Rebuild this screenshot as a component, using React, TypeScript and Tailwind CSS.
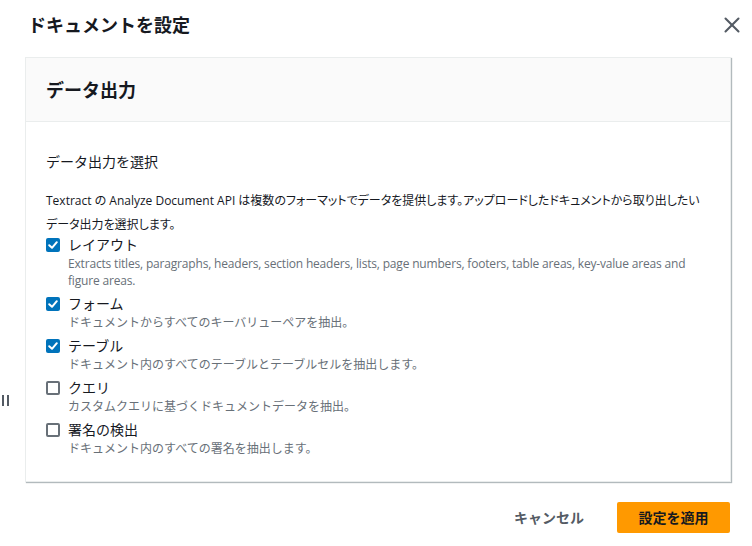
import { X } from 'lucide-react';

interface OutputOption {
  label: string;
  description: string;
  checked: boolean;
  latin?: boolean;
}

const options: OutputOption[] = [
  {
    label: 'レイアウト',
    description:
      'Extracts titles, paragraphs, headers, section headers, lists, page numbers, footers, table areas, key-value areas and figure areas.',
    checked: true,
    latin: true,
  },
  { label: 'フォーム', description: 'ドキュメントからすべてのキーバリューペアを抽出。', checked: true },
  { label: 'テーブル', description: 'ドキュメント内のすべてのテーブルとテーブルセルを抽出します。', checked: true },
  { label: 'クエリ', description: 'カスタムクエリに基づくドキュメントデータを抽出。', checked: false },
  { label: '署名の検出', description: 'ドキュメント内のすべての署名を抽出します。', checked: false },
];

function Checkbox({ checked }: { checked: boolean }) {
  if (checked) {
    return (
      <span className="flex h-[14px] w-[14px] items-center justify-center rounded-[2px] bg-[#0073bb]">
        <svg viewBox="0 0 14 14" className="h-[14px] w-[14px]" fill="none">
          <path d="M3.2 7.2 L6 9.8 L10.8 4.2" stroke="white" strokeWidth="2" strokeLinecap="round" strokeLinejoin="round" />
        </svg>
      </span>
    );
  }
  return <span className="block h-[14px] w-[14px] rounded-[2px] border-2 border-[#687078] bg-white" />;
}

export default function App() {
  return (
    <div
      className="relative h-[546px] w-[752px] overflow-hidden bg-white text-[#16191f]"
      style={{ fontFamily: '"Open Sans", "Noto Sans CJK JP", sans-serif' }}
    >
      {/* drag handle peeking in from the left */}
      <div className="absolute left-[2px] top-[395px] flex gap-[3px]">
        <span className="block h-[11px] w-[2px] bg-[#545b64]" />
        <span className="block h-[11px] w-[2px] bg-[#545b64]" />
      </div>

      <div className="flex items-center justify-between pl-[28px] pr-[7px] pt-[12px]">
        <h1 className="text-[18px] font-bold leading-[26px]">ドキュメントを設定</h1>
        <X className="h-[26px] w-[26px] text-[#545b64]" strokeWidth={1.9} />
      </div>

      <div className="ml-[25px] mr-[21px] mt-[19px] border border-[#eaeded] shadow-[1px_1px_1px_0_rgba(0,28,36,0.3)]">
        <div className="flex h-[64px] items-center border-b border-[#eaeded] bg-[#fafafa] px-[20px]">
          <h2 className="text-[18px] font-bold leading-[26px]">データ出力</h2>
        </div>
        <div className="px-[20px] pb-[24px] pt-[29px]">
          <div className="text-[14px] leading-[22px]">データ出力を選択</div>
          <p className="mt-[16px] text-[12px] leading-[24px] [font-feature-settings:'palt']">
            Textract の Analyze Document API は複数のフォーマットでデータを提供します。アップロードしたドキュメントから取り出したいデータ出力を選択します。
          </p>
          <div className="-mt-[2px] flex flex-col gap-[5px]">
            {options.map((o) => (
              <div key={o.label} className="flex gap-[8px]">
                <div className="pt-[3px]">
                  <Checkbox checked={o.checked} />
                </div>
                <div>
                  <div className="text-[14px] leading-[20px]">{o.label}</div>
                  <div
                    className={`text-[12px] leading-[17px] text-[#687078] ${o.latin ? 'tracking-[-0.18px]' : ''}`}
                  >
                    {o.description}
                  </div>
                </div>
              </div>
            ))}
          </div>
        </div>
      </div>

      <div className="mr-[22px] mt-[20px] flex items-center justify-end gap-[33px]">
        <button className="text-[14px] font-bold text-[#545b64]">キャンセル</button>
        <button className="h-[31px] w-[113px] rounded-[2px] bg-[#ff9900] text-[14px] font-bold text-[#16191f]">
          設定を適用
        </button>
      </div>
    </div>
  );
}
